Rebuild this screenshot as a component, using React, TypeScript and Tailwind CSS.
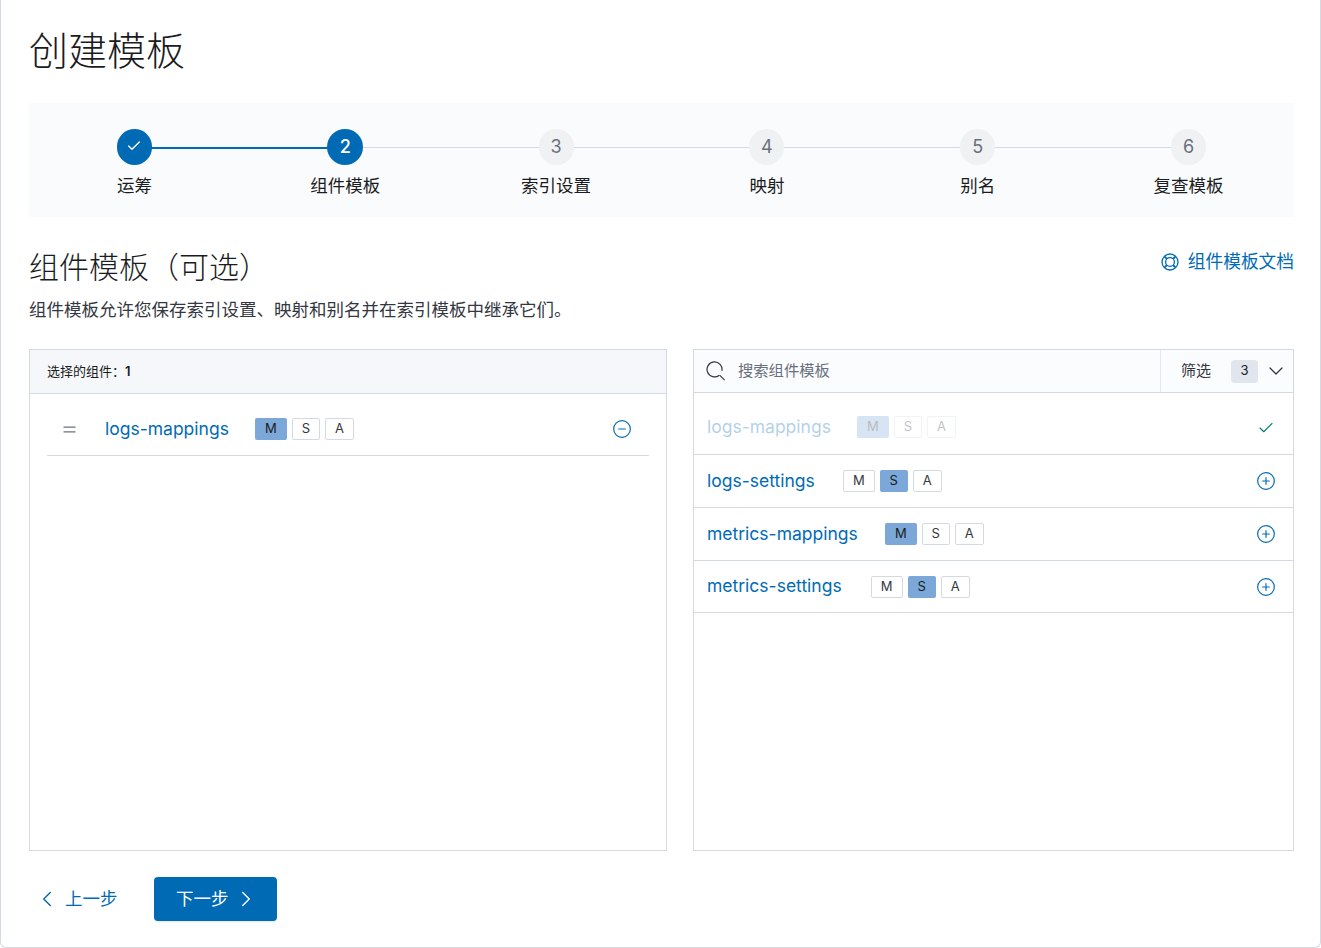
import { Check, ChevronDown, ChevronLeft, ChevronRight, CircleMinus, CirclePlus, Equal } from "lucide-react";

const font = "font-['Inter','Noto_Sans_CJK_SC',sans-serif]";

const steps = [
  { num: "1", label: "运筹", state: "done" },
  { num: "2", label: "组件模板", state: "current" },
  { num: "3", label: "索引设置", state: "todo" },
  { num: "4", label: "映射", state: "todo" },
  { num: "5", label: "别名", state: "todo" },
  { num: "6", label: "复查模板", state: "todo" },
];

type Template = { name: string; active: "M" | "S"; gap: string; added?: boolean };

const templates: Template[] = [
  { name: "logs-mappings", active: "M", gap: "ml-[26px]", added: true },
  { name: "logs-settings", active: "S", gap: "ml-[28px]" },
  { name: "metrics-mappings", active: "M", gap: "ml-[27px]" },
  { name: "metrics-settings", active: "S", gap: "ml-[29px]" },
];

const badgeWidths: Record<string, string> = { M: "w-[32px]", S: "w-[28px]", A: "w-[29px]" };

function Badge({ letter, active }: { letter: string; active: boolean }) {
  return (
    <span
      className={
        active
          ? `flex h-[22px] items-center justify-center rounded-[2px] bg-[#7ba8d8] text-[13px] text-[#1a1c21] ${badgeWidths[letter]}`
          : `flex h-[22px] items-center justify-center rounded-[2px] border border-[#d3dae6] bg-white text-[13px] text-[#343741] ${badgeWidths[letter]}`
      }
    >
      {letter}
    </span>
  );
}

function Badges({ active }: { active: string }) {
  return (
    <div className="flex gap-[5px]">
      {["M", "S", "A"].map((l) => (
        <Badge key={l} letter={l} active={l === active} />
      ))}
    </div>
  );
}

function DocsIcon() {
  return (
    <svg width="18" height="18" viewBox="0 0 18 18" fill="none" stroke="currentColor" strokeWidth="1.3">
      <circle cx="9" cy="9" r="8" />
      <circle cx="9" cy="9" r="4.4" />
      <path d="M3.6 3.6l2.3 2.3M14.4 3.6l-2.3 2.3M3.6 14.4l2.3-2.3M14.4 14.4l-2.3-2.3" strokeWidth="2" />
    </svg>
  );
}

function SearchIcon() {
  return (
    <svg width="20" height="20" viewBox="0 0 20 20" fill="none" stroke="currentColor" strokeWidth="1.2" className="text-[#343741]">
      <path d="M13.3 14.2A7.5 7.5 0 1 1 15.9 9.8" />
      <path d="M13.6 14.2l5 5" />
    </svg>
  );
}

function Stepper() {
  return (
    <div className="flex h-[114px] bg-[#fafbfd]">
      {steps.map((s, i) => (
        <div key={s.num} className="relative flex flex-1 flex-col items-center pt-[26px]">
          {i < steps.length - 1 && (
            <div
              className={
                s.state === "done"
                  ? "absolute left-1/2 top-[44px] h-[2px] w-full bg-[#006bb4]"
                  : "absolute left-1/2 top-[44px] h-px w-full bg-[#d3dae6]"
              }
            />
          )}
          {s.state === "todo" ? (
            <div className="relative flex h-[36px] w-[35px] items-center justify-center rounded-full bg-[#f0f1f3] pb-[2px] text-[18px] text-[#69707d]">
              {s.num}
            </div>
          ) : (
            <div
              className={
                s.state === "done"
                  ? "relative flex h-[36px] w-[35px] items-center justify-center rounded-full bg-[#006bb4] pb-[2px] text-white"
                  : "relative flex h-[36px] w-[36px] items-center justify-center rounded-full bg-[#006bb4] pb-[2px] text-[18px] font-medium text-white"
              }
            >
              {s.state === "done" ? <Check size={16} strokeWidth={2} /> : s.num}
            </div>
          )}
          <div className="mt-[8px] text-[17.5px] leading-[26px] text-[#1a1c21]">{s.label}</div>
        </div>
      ))}
    </div>
  );
}

function SelectedPanel() {
  return (
    <div className="flex h-[502px] w-[638px] flex-col border border-[#d3dae6]">
      <div className="flex h-[44px] items-center border-b border-[#d3dae6] bg-[#f5f7fa] pl-[17px] pt-[1px] text-[13px] text-[#1a1c21]">
        选择的组件：<span className="font-semibold">1</span>
      </div>
      <div className="mx-[17px] flex h-[62px] items-center border-b border-[#d3dae6] pl-[13px] pr-[17px] pt-[9px]">
        <Equal size={19} strokeWidth={1.5} className="text-[#69707d]" />
        <span className="ml-[26px] text-[17.5px] text-[#006bb4]">logs-mappings</span>
        <div className="ml-[26px]">
          <Badges active="M" />
        </div>
        <CircleMinus size={20} strokeWidth={1.4} className="ml-auto text-[#006bb4]" />
      </div>
    </div>
  );
}

function AvailablePanel() {
  return (
    <div className="flex h-[502px] w-[601px] flex-col border border-[#d3dae6]">
      <div className="flex h-[43px] border-b border-[#d3dae6] bg-[#fbfcfd]">
        <div className="flex flex-1 items-center border-r border-[#e4e8f0] pl-[12px] text-[15.3px] text-[#69707d]">
          <SearchIcon />
          <span className="ml-[12px]">搜索组件模板</span>
        </div>
        <div className="flex w-[132px] items-center pl-[20px] text-[15px] text-[#343741]">
          筛选
          <span className="ml-[20px] flex h-[23px] w-[27px] items-center justify-center rounded-[4px] bg-[#e0e5ee] text-[13px] text-[#1a1c21]">
            3
          </span>
          <ChevronDown size={24} strokeWidth={1.3} className="ml-[6px] text-[#343741]" />
        </div>
      </div>
      {templates.map((t) => (
        <div
          key={t.name}
          className={
            t.added
              ? "flex h-[62px] items-center border-b border-[#d3dae6] pl-[13px] pr-[17px] pt-[7px]"
              : "flex h-[53px] items-center border-b border-[#d3dae6] pl-[13px] pr-[17px] last:h-[52px]"
          }
        >
          <div className={t.added ? "flex items-center opacity-30" : "flex items-center"}>
            <span className="text-[17.5px] text-[#006bb4]">{t.name}</span>
            <div className={t.gap}>
              <Badges active={t.active} />
            </div>
          </div>
          {t.added ? (
            <Check size={18} strokeWidth={1.5} className="ml-auto mr-[1px] mt-[2px] text-[#017d73]" />
          ) : (
            <CirclePlus size={20} strokeWidth={1.4} className="ml-auto text-[#006bb4]" />
          )}
        </div>
      ))}
    </div>
  );
}

export default function App() {
  return (
    <div className={`${font} h-[948px] overflow-hidden rounded-b-[6px] border-x border-b border-[#d3dae6] bg-white pl-[28px] pr-[26px] pt-[26px]`}>
      <h1 className="text-[39px] font-light leading-[50px] text-[#1a1c21]">创建模板</h1>
      <div className="mt-[27px]">
        <Stepper />
      </div>
      <div className="mt-[30px] flex items-start justify-between">
        <h2 className="text-[30px] font-light leading-[40px] text-[#1a1c21]">组件模板（可选）</h2>
        <a className="mt-[2px] flex items-center text-[17.7px] leading-[26px] text-[#006bb4]">
          <DocsIcon />
          <span className="ml-[9px]">组件模板文档</span>
        </a>
      </div>
      <p className="mt-[10px] text-[17.5px] leading-[26px] text-[#343741]">
        组件模板允许您保存索引设置、映射和别名并在索引模板中继承它们。
      </p>
      <div className="mt-[26px] flex justify-between">
        <SelectedPanel />
        <AvailablePanel />
      </div>
      <div className="mt-[26px] flex items-center">
        <button className="flex h-[44px] w-[125px] items-center pl-[5px] text-[17.5px] text-[#006bb4]">
          <ChevronLeft size={26} strokeWidth={1.3} />
          <span className="ml-[5px]">上一步</span>
        </button>
        <button className="flex h-[44px] w-[123px] items-center rounded-[4px] bg-[#006bb4] pl-[22px] text-[17.5px] text-white shadow-[0_2px_2px_-1px_rgba(152,162,179,0.3)]">
          下一步
          <ChevronRight size={26} strokeWidth={1.3} className="ml-[4px]" />
        </button>
      </div>
    </div>
  );
}
